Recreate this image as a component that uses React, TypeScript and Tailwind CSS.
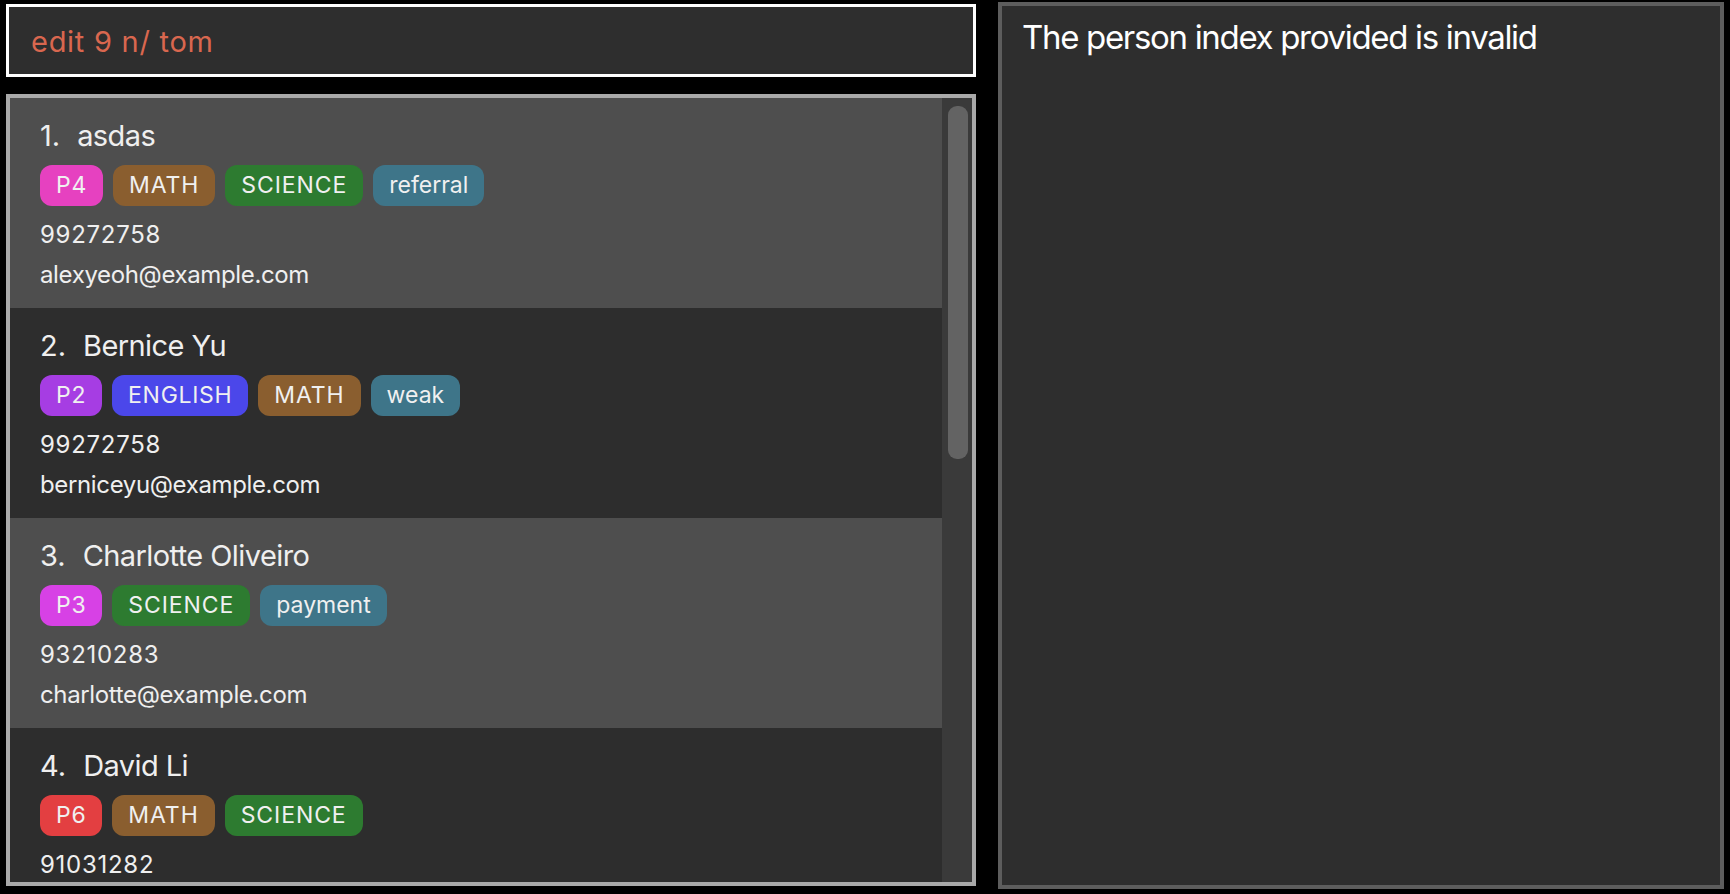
type Tag = { label: string; className: string };

type Person = {
  id: number;
  name: string;
  tags: Tag[];
  phone: string;
  email: string;
};

const LEVEL: Record<string, string> = {
  P2: "bg-[#a63de3] tracking-[0.03em]",
  P3: "bg-[#d741e5] tracking-[0.03em]",
  P4: "bg-[#e641c0] tracking-[0.03em]",
  P6: "bg-[#e33f41] tracking-[0.03em]",
};

const SUBJECT: Record<string, string> = {
  MATH: "bg-[#8a5e2f] tracking-[0.04em]",
  SCIENCE: "bg-[#2d7b30] tracking-[0.04em]",
  ENGLISH: "bg-[#4b47ea] tracking-[0.03em]",
};

const NOTE = "bg-[#3e7589]";

const tag = (label: string): Tag => ({
  label,
  className: LEVEL[label] ?? SUBJECT[label] ?? NOTE,
});

const people: Person[] = [
  {
    id: 1,
    name: "asdas",
    tags: ["P4", "MATH", "SCIENCE", "referral"].map(tag),
    phone: "99272758",
    email: "alexyeoh@example.com",
  },
  {
    id: 2,
    name: "Bernice Yu",
    tags: ["P2", "ENGLISH", "MATH", "weak"].map(tag),
    phone: "99272758",
    email: "berniceyu@example.com",
  },
  {
    id: 3,
    name: "Charlotte Oliveiro",
    tags: ["P3", "SCIENCE", "payment"].map(tag),
    phone: "93210283",
    email: "charlotte@example.com",
  },
  {
    id: 4,
    name: "David Li",
    tags: ["P6", "MATH", "SCIENCE"].map(tag),
    phone: "91031282",
    email: "lidavid@example.com",
  },
];

function PersonCard({ person }: { person: Person }) {
  const odd = person.id % 2 === 1;
  return (
    <div
      className={`h-[210px] shrink-0 pl-[30px] pt-[20px] text-[#efefef] ${
        odd ? "bg-[#4e4e4e]" : "bg-[#2d2d2d]"
      }`}
    >
      <div className="flex gap-[17px] text-[29px] leading-[36px]">
        <span>{person.id}.</span>
        <span className="tracking-[-0.02em]">{person.name}</span>
      </div>
      <div className="mt-[11px] flex gap-[10px]">
        {person.tags.map((t) => (
          <span
            key={t.label}
            className={`flex h-[41px] items-center rounded-[12px] px-[16px] text-[23px] text-[#f0f0f0] ${t.className}`}
          >
            {t.label}
          </span>
        ))}
      </div>
      <div className="mt-[10px] text-[24px] leading-[38px] tracking-[0.03em]">{person.phone}</div>
      <div className="mt-[2px] text-[24px] leading-[38px] tracking-[-0.015em]">{person.email}</div>
    </div>
  );
}

export default function App() {
  return (
    <div
      className="flex h-[894px] w-[1730px] overflow-hidden bg-black"
      style={{ fontFamily: "Inter, 'Noto Sans', sans-serif" }}
    >
      <div className="ml-[6px] flex w-[970px] flex-col">
        <div className="mt-[4px] h-[73px] border-[3px] border-white bg-[#2e2e2e] pl-[22px] pt-[18px] text-[29px] leading-[34px] tracking-[0.025em] text-[#d9674f]">
          edit 9 n/ tom
        </div>

        <div className="mt-[17px] flex h-[792px] overflow-hidden border-4 border-[#a9a9a9]">
          <div className="flex flex-1 flex-col overflow-hidden">
            {people.map((p) => (
              <PersonCard key={p.id} person={p} />
            ))}
          </div>
          <div className="w-[30px] bg-[#3a3a3a] pl-[6px] pt-[8px]">
            <div className="h-[353px] w-[20px] rounded-[9px] bg-[#636363]" />
          </div>
        </div>
      </div>

      <div className="ml-[22px] mt-[2px] h-[887px] w-[726px] border-4 border-[#5d5d5d] bg-[#2e2e2e] pl-[20px] pt-[11px] text-[33px] leading-[40px] tracking-[-0.04em] text-white">
        The person index provided is invalid
      </div>
    </div>
  );
}
